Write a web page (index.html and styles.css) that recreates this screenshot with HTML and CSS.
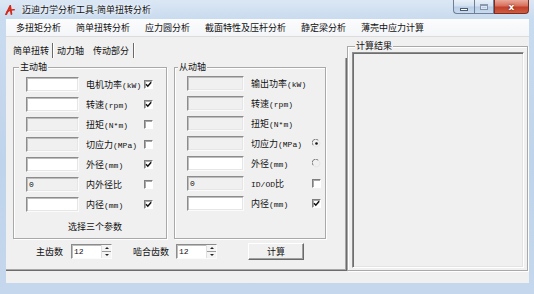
FILE: index.html
```html
<!DOCTYPE html>
<html lang="zh-CN">
<head>
<meta charset="utf-8">
<title>迈迪力学分析工具-简单扭转分析</title>
<link rel="stylesheet" href="styles.css">
</head>
<body>
<div class="win">
  <div class="titlebar">
    <svg class="appicon" viewBox="0 0 10 10" width="10" height="10">
      <path d="M1 9.5 L5.2 1 L6.4 9" fill="none" stroke="#d42a1c" stroke-width="1.8" stroke-linecap="round"/>
      <path d="M2.2 6.8 C4 5.2 6.5 4.6 9.3 4.8" fill="none" stroke="#d42a1c" stroke-width="1.4" stroke-linecap="round"/>
    </svg>
    <span class="title">迈迪力学分析工具-简单扭转分析</span>
    <div class="caption">
      <span class="cb cb-min"><span class="g-min"></span></span>
      <span class="cb cb-max"><span class="g-max"></span></span>
      <span class="cb cb-close">x</span>
    </div>
  </div>
  <div class="client">
    <div class="menubar">
      <span class="mi">多扭矩分析</span>
      <span class="mi">简单扭转分析</span>
      <span class="mi">应力圆分析</span>
      <span class="mi">截面特性及压杆分析</span>
      <span class="mi">静定梁分析</span>
      <span class="mi">薄壳中应力计算</span>
    </div>
    <div class="main">
      <div class="tabs">
        <div class="tabstrip">
          <span class="tab">简单扭转</span><span class="sep"></span>
          <span class="tab">动力轴</span><span class="sep sep-light"></span>
          <span class="tab tab-sel">传动部分</span><span class="sep"></span>
        </div>
        <div class="tabpage">
          <div class="groups">
            <div class="grp grp-drive">
              <span class="legend">主动轴</span>
              <div class="rows rows-drive">
                <span class="tb"></span><span class="lbl">电机功率<span class="u">(kW)</span></span><span class="chk on"><svg viewBox="0 0 7 7"><path d="M1 3.2 L2.8 5.2 L6.2 1.2" fill="none" stroke="#111" stroke-width="1.5"/></svg></span>
                <span class="tb"></span><span class="lbl">转速<span class="u">(rpm)</span></span><span class="chk on"><svg viewBox="0 0 7 7"><path d="M1 3.2 L2.8 5.2 L6.2 1.2" fill="none" stroke="#111" stroke-width="1.5"/></svg></span>
                <span class="tb dis"></span><span class="lbl">扭矩<span class="u">(N*m)</span></span><span class="chk"></span>
                <span class="tb dis"></span><span class="lbl">切应力<span class="u">(MPa)</span></span><span class="chk"></span>
                <span class="tb"></span><span class="lbl">外径<span class="u">(mm)</span></span><span class="chk on"><svg viewBox="0 0 7 7"><path d="M1 3.2 L2.8 5.2 L6.2 1.2" fill="none" stroke="#111" stroke-width="1.5"/></svg></span>
                <span class="tb dis"><span class="u">0</span></span><span class="lbl">内外径比</span><span class="chk"></span>
                <span class="tb"></span><span class="lbl">内径<span class="u">(mm)</span></span><span class="chk on"><svg viewBox="0 0 7 7"><path d="M1 3.2 L2.8 5.2 L6.2 1.2" fill="none" stroke="#111" stroke-width="1.5"/></svg></span>
              </div>
              <div class="hint">选择三个参数</div>
            </div>
            <div class="grp grp-driven">
              <span class="legend">从动轴</span>
              <div class="rows rows-driven">
                <span class="tb dis"></span><span class="lbl">输出功率<span class="u">(kW)</span></span><span class="none"></span>
                <span class="tb dis"></span><span class="lbl">转速<span class="u">(rpm)</span></span><span class="none"></span>
                <span class="tb dis"></span><span class="lbl">扭矩<span class="u">(N*m)</span></span><span class="none"></span>
                <span class="tb dis"></span><span class="lbl">切应力<span class="u">(MPa)</span></span><span class="rad"><svg viewBox="0 0 9 9"><path d="M1.2 6.3 A3.6 3.6 0 0 1 6.3 1.2" fill="none" stroke="#7a7a7a" stroke-width="1"/><path d="M7.3 2.3 A3.6 3.6 0 0 1 2.3 7.3" fill="none" stroke="#e4e4e4" stroke-width="1"/><circle cx="4.5" cy="4.5" r="1.3" fill="#111"/></svg></span>
                <span class="tb"></span><span class="lbl">外径<span class="u">(mm)</span></span><span class="rad"><svg viewBox="0 0 9 9"><path d="M1.2 6.3 A3.6 3.6 0 0 1 6.3 1.2" fill="none" stroke="#7a7a7a" stroke-width="1"/><path d="M7.3 2.3 A3.6 3.6 0 0 1 2.3 7.3" fill="none" stroke="#e4e4e4" stroke-width="1"/></svg></span>
                <span class="tb dis"><span class="u">0</span></span><span class="lbl"><span class="u">ID/OD</span>比</span><span class="chk"></span>
                <span class="tb"></span><span class="lbl">内径<span class="u">(mm)</span></span><span class="chk on"><svg viewBox="0 0 7 7"><path d="M1 3.2 L2.8 5.2 L6.2 1.2" fill="none" stroke="#111" stroke-width="1.5"/></svg></span>
              </div>
            </div>
          </div>
          <div class="bottom-row">
            <span class="blbl">主齿数</span>
            <span class="spin"><span class="u">12</span><span class="spin-btns"><span class="arr up"></span><span class="arr dn"></span></span></span>
            <span class="blbl blbl2">啮合齿数</span>
            <span class="spin spin2"><span class="u">12</span><span class="spin-btns"><span class="arr up"></span><span class="arr dn"></span></span></span>
            <span class="btn">计算</span>
          </div>
        </div>
      </div>
      <div class="grp grp-result">
        <span class="legend">计算结果</span>
        <div class="result-box"></div>
      </div>
    </div>
    <div class="statusbar"></div>
  </div>
</div>
</body>
</html>
```
FILE: styles.css
```css
* { box-sizing: border-box; margin: 0; padding: 0; }
html, body { width: 534px; height: 294px; overflow: hidden; }
body {
  font-family: "Noto Sans CJK SC", "Noto Sans", sans-serif;
  font-size: 9px;
  color: #111;
  background: #c6d8ee;
}
.win {
  width: 534px;
  height: 294px;
  display: flex;
  flex-direction: column;
  background: linear-gradient(180deg, #dbe7f4 0px, #c9dbef 19px, #bfd3ea 160px, #c4d7ed 294px);
}
.titlebar {
  height: 19px;
  flex: none;
  display: flex;
  align-items: center;
  padding-left: 5px;
}
.appicon { width: 10px; height: 10px; margin-right: 7px; flex: none; }
.title {
  line-height: 12px;
  color: #111;
  text-shadow: 0 0 3px #fff, 0 0 5px #eef5fc;
}
.caption {
  margin-left: auto;
  margin-right: 5px;
  align-self: flex-start;
  display: flex;
  height: 14px;
}
.cb {
  height: 14px;
  display: flex;
  align-items: center;
  justify-content: center;
  border: 1px solid #6f7f95;
  border-top: none;
}
.cb-min {
  width: 21px;
  border-radius: 0 0 0 4px;
  border-right: none;
  background: linear-gradient(180deg, #e8f0f9 0%, #d3e1f1 45%, #b9cde6 55%, #c8dbf0 100%);
}
.cb-max {
  width: 20px;
  background: linear-gradient(180deg, #e8f0f9 0%, #d3e1f1 45%, #b9cde6 55%, #c8dbf0 100%);
}
.cb-close {
  width: 35px;
  border-color: #7d2c20;
  border-radius: 0 0 4px 0;
  background: linear-gradient(180deg, #e9a898 0%, #d8705d 45%, #c1402b 55%, #cf5d3f 100%);
  color: #fff;
  font-family: "DejaVu Sans", sans-serif;
  font-weight: bold;
  font-size: 9px;
  line-height: 12px;
  text-shadow: 0 0 2px #5a1a10;
}
.g-min {
  width: 8px; height: 3px;
  margin-top: 5px;
  background: #fff;
  border: 1px solid #4b5a70;
}
.g-max {
  width: 8px; height: 6px;
  border: 1px solid #5a6a80;
  border-top-width: 2px;
  box-shadow: inset 0 0 0 1px #eef4fb;
  opacity: 0.6;
}

.client {
  flex: 1;
  margin: 0 5px 11px 6px;
  background: #f0f0f0;
  display: flex;
  flex-direction: column;
}
.menubar {
  height: 18px;
  flex: none;
  display: flex;
  align-items: center;
  gap: 15px;
  padding-left: 10px;
  background: linear-gradient(180deg, #fcfcfd, #f3f5f8);
  border-bottom: 1px solid #dcdcdc;
}
.mi { line-height: 12px; white-space: nowrap; }

.main {
  flex: 1;
  display: flex;
}
.tabs {
  width: 341px;
  display: flex;
  flex-direction: column;
}
.tabstrip {
  height: 21px;
  flex: none;
  display: flex;
  align-items: flex-end;
  padding-left: 4px;
}
.tab { padding: 0 3px; line-height: 15px; white-space: nowrap; }
.tab-sel { padding: 0 4px; }
.sep {
  width: 2px;
  height: 15px;
  border-left: 1px solid #6a6a6a;
  border-right: 1px solid #fff;
}
.sep-light { border-left-color: #f0f0f0; border-right-color: #f0f0f0; }

.tabpage {
  flex: 1;
  padding: 9px 0 0 7px;
  border-right: 1px solid #6c6c6c;
  border-bottom: 1px solid #6c6c6c;
  box-shadow: inset -1px -1px 0 #a8a8a8;
}
.groups {
  display: flex;
  gap: 7px;
  height: 172px;
}
.grp {
  position: relative;
  border: 1px solid #a9a9a9;
  box-shadow: inset 1px 1px 0 #fff, 1px 1px 0 #fff;
}
.legend {
  position: absolute;
  top: -7px;
  line-height: 12px;
  padding: 0 1px;
  background: #f0f0f0;
  white-space: nowrap;
}
.grp-drive { width: 154px; padding: 9px 0 0 12px; }
.grp-drive .legend { left: 5px; }
.grp-driven { width: 152px; padding: 8px 0 0 12px; }
.grp-driven .legend { left: 3px; }

.rows {
  display: grid;
  grid-auto-rows: 15px;
  row-gap: 5px;
  column-gap: 7px;
  align-items: center;
}
.rows-drive { grid-template-columns: 53px 51px 9px; }
.rows-driven { grid-template-columns: 57px 54px 9px; }
.rows .lbl { margin-right: -7px; }

.tb {
  height: 15px;
  display: flex;
  align-items: center;
  padding-left: 2px;
  background: #fff;
  border: 1px solid;
  border-color: #8c8c8c #fbfbfb #fbfbfb #8c8c8c;
  box-shadow: inset 1px 1px 0 #bdbdbd, inset -1px -1px 0 #e6e6e6;
}
.tb.dis { background: #f0f0f0; }
.u {
  font-family: "Liberation Mono", monospace;
  font-size: 8px;
}
.lbl { line-height: 15px; white-space: nowrap; }
.chk {
  width: 9px;
  height: 9px;
  background: #fff;
  border: 1px solid;
  border-color: #7e7e7e #fff #fff #7e7e7e;
  box-shadow: inset 1px 1px 0 #a8a8a8;
  display: flex;
  align-items: center;
  justify-content: center;
}
.chk svg { width: 7px; height: 7px; }
.rad { width: 9px; height: 9px; display: block; }
.rad svg { width: 9px; height: 9px; display: block; }
.none { width: 9px; height: 9px; }

.hint {
  margin: 9px 0 0 42px;
  line-height: 12px;
  white-space: nowrap;
}

.bottom-row {
  margin-top: 4px;
  height: 17px;
  display: flex;
  align-items: center;
  padding-left: 23px;
}
.blbl { line-height: 12px; white-space: nowrap; margin-right: 8px; }
.blbl2 { margin-right: 7px; }
.spin {
  width: 41px;
  height: 15px;
  display: flex;
  align-items: center;
  padding-left: 2px;
  background: #fff;
  border: 1px solid;
  border-color: #8c8c8c #fbfbfb #fbfbfb #8c8c8c;
  box-shadow: inset 1px 1px 0 #bdbdbd;
  margin-right: 21px;
}
.spin2 { margin-right: 31px; }
.spin-btns {
  margin-left: auto;
  width: 10px;
  height: 13px;
  display: flex;
  flex-direction: column;
  background: #f4f4f4;
  border-left: 1px solid #e0e0e0;
}
.arr {
  flex: 1;
  display: flex;
  align-items: center;
  justify-content: center;
}
.arr.up { border-bottom: 1px solid #9a9a9a; }
.arr::before {
  content: "";
  width: 0; height: 0;
  border-left: 2px solid transparent;
  border-right: 2px solid transparent;
}
.arr.up::before { border-bottom: 2px solid #222; }
.arr.dn::before { border-top: 2px solid #222; }

.btn {
  width: 56px;
  height: 17px;
  display: flex;
  align-items: center;
  justify-content: center;
  line-height: 12px;
  border: 1px solid;
  border-color: #fff #6a6a6a #6a6a6a #fff;
  box-shadow: inset -1px -1px 0 #a0a0a0;
  background: #f0f0f0;
}

.grp-result {
  width: 181px;
  margin-top: 9px;
  height: 225px;
  padding: 5px 3px 2px 4px;
}
.grp-result .legend { left: 7px; }
.result-box {
  width: 100%;
  height: 100%;
  background: #f0f0f0;
  border: 1px solid;
  border-color: #8c8c8c #fff #fff #8c8c8c;
  box-shadow: inset 1px 1px 0 #6e6e6e, inset -1px -1px 0 #e3e3e3;
}
.statusbar { height: 12px; flex: none; }
```
